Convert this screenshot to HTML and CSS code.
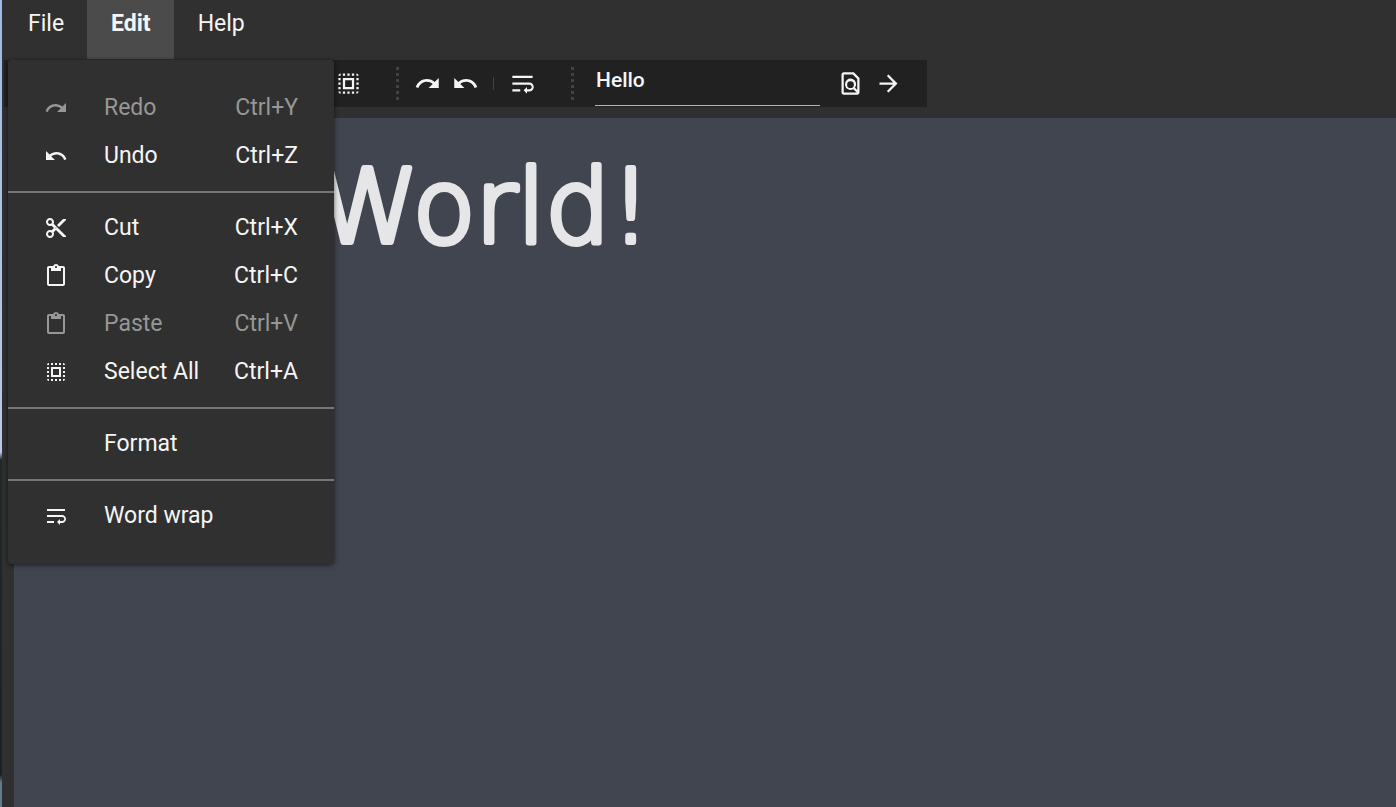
FILE: index.html
```html
<!DOCTYPE html>
<html lang="en">
<head>
<meta charset="utf-8">
<title>Text editor</title>
<link rel="stylesheet" href="styles.css">
</head>
<body>
<svg class="symbols" aria-hidden="true">
  <symbol id="redo" viewBox="0 0 24 24"><path d="M18.4 10.6C16.55 8.99 14.15 8 11.5 8c-4.65 0-8.58 3.03-9.96 7.22L3.9 16c1.05-3.19 4.05-5.5 7.6-5.5 1.95 0 3.73.72 5.12 1.88L13 16h9V7l-3.6 3.6z"/></symbol>
  <symbol id="undo" viewBox="0 0 24 24"><path d="M12.5 8c-2.65 0-5.05.99-6.9 2.6L2 7v9h9l-3.62-3.62c1.39-1.16 3.16-1.88 5.12-1.88 3.54 0 6.55 2.31 7.6 5.5l2.37-.78C21.08 11.03 17.15 8 12.5 8z"/></symbol>
  <symbol id="cut" viewBox="0 0 24 24"><path d="M9.64 7.64c.23-.5.36-1.05.36-1.64 0-2.21-1.79-4-4-4S2 3.790 2 6s1.790 4 4 4c.59 0 1.140-.13 1.640-.36L10 12l-2.360 2.360C7.140 14.130 6.590 14 6 14c-2.210 0-4 1.790-4 4s1.790 4 4 4 4-1.790 4-4c0-.59-.13-1.140-.36-1.640L12 14l7 7h3v-1L9.640 7.640zM6 8c-1.100 0-2-.89-2-2s.9-2 2-2 2 .89 2 2-.9 2-2 2zm0 12c-1.100 0-2-.89-2-2s.9-2 2-2 2 .89 2 2-.9 2-2 2zm6-7.500c-.28 0-.5-.22-.5-.5s.22-.5.5-.5.5.22.5.5-.22.5-.5.5zM19 3l-6 6 2 2 7-7V3z"/></symbol>
  <symbol id="clipboard" viewBox="0 0 24 24"><path d="M19 2h-4.180C14.400.840 13.300 0 12 0c-1.300 0-2.400.840-2.820 2H5c-1.100 0-2 .9-2 2v16c0 1.100.9 2 2 2h14c1.100 0 2-.9 2-2V4c0-1.100-.9-2-2-2zm-7 0c.55 0 1 .45 1 1s-.45 1-1 1-1-.45-1-1 .45-1 1-1zm7 18H5V4h2v3h10V4h2v16z"/></symbol>
  <symbol id="select" viewBox="0 0 24 24"><path d="M3 5h2V3c-1.100 0-2 .9-2 2zm0 8h2v-2H3v2zm4 8h2v-2H7v2zM3 9h2V7H3v2zm10-6h-2v2h2V3zm6 0v2h2c0-1.100-.9-2-2-2zM5 21v-2H3c0 1.100.9 2 2 2zm-2-4h2v-2H3v2zM9 3H7v2h2V3zm2 18h2v-2h-2v2zm8-8h2v-2h-2v2zm0 8c1.100 0 2-.9 2-2h-2v2zm0-12h2V7h-2v2zm0 8h2v-2h-2v2zm-4 4h2v-2h-2v2zm0-16h2V3h-2v2zM7 17h10V7H7v10zm2-8h6v6H9V9z"/></symbol>
  <symbol id="wrap" viewBox="0 0 24 24"><path d="M3 19h7v-2H3v2zM21 5H3v2h18V5zm-3 6H3v2h15.250c1.100 0 2 .9 2 2s-.9 2-2 2H16v-2l-3 3 3 3v-2h2c2.210 0 4-1.790 4-4s-1.790-4-4-4z"/></symbol>
  <symbol id="find" viewBox="0 0 24 24"><path fill-rule="evenodd" d="M6 2h9l5 5v13c0 1.100-.9 2-2 2H6c-1.100 0-2-.9-2-2V4c0-1.100.9-2 2-2zm0 2v16h11.500l-3-3A5 5 0 1 1 16 15.700l2 2V8l-4-4H6zm6 6a3 3 0 1 0 0 6 3 3 0 0 0 0-6z"/></symbol>
  <symbol id="arrow" viewBox="0 0 24 24"><path d="M12 4l-1.410 1.410L16.170 11H4v2h12.170l-5.580 5.590L12 20l8-8z"/></symbol>
</svg>
<div class="window">
  <div class="desktop-edge"></div>
  <div class="app">
    <nav class="menubar" aria-label="Main">
      <button class="menubar-item">File</button>
      <button class="menubar-item open" aria-expanded="true">Edit</button>
      <button class="menubar-item">Help</button>
    </nav>
    <div class="menu" role="menu" aria-label="Edit">
      <div class="group">
        <button class="item" role="menuitem" disabled><svg><use href="#redo"/></svg><span>Redo</span><kbd>Ctrl+Y</kbd></button>
        <button class="item" role="menuitem"><svg><use href="#undo"/></svg><span>Undo</span><kbd>Ctrl+Z</kbd></button>
      </div>
      <div class="group">
        <button class="item" role="menuitem"><svg><use href="#cut"/></svg><span>Cut</span><kbd>Ctrl+X</kbd></button>
        <button class="item" role="menuitem"><svg><use href="#clipboard"/></svg><span>Copy</span><kbd>Ctrl+C</kbd></button>
        <button class="item" role="menuitem" disabled><svg><use href="#clipboard"/></svg><span>Paste</span><kbd>Ctrl+V</kbd></button>
        <button class="item" role="menuitem"><svg><use href="#select"/></svg><span>Select All</span><kbd>Ctrl+A</kbd></button>
      </div>
      <div class="group">
        <button class="item" role="menuitem"><svg></svg><span>Format</span></button>
      </div>
      <div class="group">
        <button class="item" role="menuitem"><svg><use href="#wrap"/></svg><span>Word wrap</span></button>
      </div>
    </div>
    <div class="toolbar" role="toolbar">
      <div class="tools">
        <button class="tool" aria-label="Select all"><svg><use href="#select"/></svg></button>
      </div>
      <div class="tools gripped">
        <button class="tool" aria-label="Redo"><svg><use href="#redo"/></svg></button>
        <button class="tool" aria-label="Undo"><svg><use href="#undo"/></svg></button>
        <span class="separator"></span>
        <button class="tool" aria-label="Word wrap"><svg><use href="#wrap"/></svg></button>
      </div>
      <div class="tools gripped search">
        <input class="query" type="text" value="Hello" aria-label="Find">
        <button class="tool" aria-label="Find in page"><svg><use href="#find"/></svg></button>
        <button class="tool" aria-label="Next"><svg><use href="#arrow"/></svg></button>
      </div>
    </div>
    <main class="editor">
      <svg class="lettering"><text x="0" y="100">World!</text></svg>
    </main>
  </div>
</div>
</body>
</html>
```

FILE: styles.css
```css
* { box-sizing: border-box; }
body {
  margin: 0;
  background: #303030;
  color: #f5f5f5;
  font: 23px/34px Roboto, sans-serif;
}
button, input { font: inherit; color: inherit; border: 0; background: none; padding: 0; margin: 0; }
svg { display: block; fill: currentColor; }
.symbols { display: none; }
.window { display: flex; min-height: 100vh; }
.desktop-edge {
  flex: 0 0 2px;
  background: linear-gradient(#9dbbe2, #b9c9e8 56%, #20282c 57%, #1b2124 96%, #607c90 97%);
}
.app {
  position: relative;
  flex: 1;
  min-width: 0;
  display: flex;
  flex-direction: column;
  padding-left: 2px;
}
.menubar { display: flex; }
.menubar-item { height: 59px; padding: 0 23px 11px 24px; }
.menubar-item.open { background: #4b4b4b; font-weight: 700; }
.menu {
  position: absolute;
  z-index: 1;
  top: 60px;
  left: 6px;
  width: 326px;
  padding: 12px 0 13px;
  background: #303030;
  border-radius: 3px;
  box-shadow: 0 1px 5px rgba(0, 0, 0, .6);
}
.group { padding: 11px 0; }
.group:first-child { padding-top: 12px; }
.group + .group { border-top: 2px solid #767676; }
.item {
  display: grid;
  grid-template-columns: 24px 1fr auto;
  column-gap: 36px;
  align-items: center;
  width: 100%;
  height: 48px;
  padding: 0 36px;
  text-align: left;
  white-space: nowrap;
}
.item svg { width: 24px; height: 24px; }
.item span { min-width: 0; }
.item kbd { font: inherit; margin-left: -8px; }
.item:disabled { color: #979797; }
.toolbar {
  display: flex;
  align-self: flex-start;
  height: 47px;
  margin-top: 1px;
  padding: 0 20px 0 325px;
  background: #212121;
}
.tools { display: flex; align-items: center; }
.tool { width: 38px; height: 40px; display: grid; place-items: center; }
.tool svg { width: 27px; height: 27px; }
.gripped { margin-left: 29px; }
.gripped::before {
  content: "";
  width: 3px;
  height: 33px;
  margin-right: 9px;
  background: repeating-linear-gradient(#424242 0 3px, transparent 3px 6px);
}
.separator { width: 1px; height: 13px; margin: 0 9px; background: #424242; }
.search { margin-left: 30px; }
.search::before { margin-right: 21px; }
.query {
  width: 225px;
  height: 45px;
  margin-right: 11px;
  padding: 0 1px 6px;
  border-bottom: 1px solid #b5b5b5;
  font-size: 21px;
  font-weight: 500;
  outline: 0;
}
.editor {
  flex: 1;
  margin: 11px 0 0 10px;
  padding: 24px 0 24px 304px;
  background: #41454f;
}
.lettering {
  width: 100%;
  height: 130px;
  overflow: visible;
  fill: #e6e6e9;
  stroke: #e6e6e9;
  stroke-width: 6px;
  stroke-linejoin: round;
  font: 102px/120px "Comic Sans MS", "DejaVu Sans Light", "DejaVu Sans", sans-serif;
}
```
